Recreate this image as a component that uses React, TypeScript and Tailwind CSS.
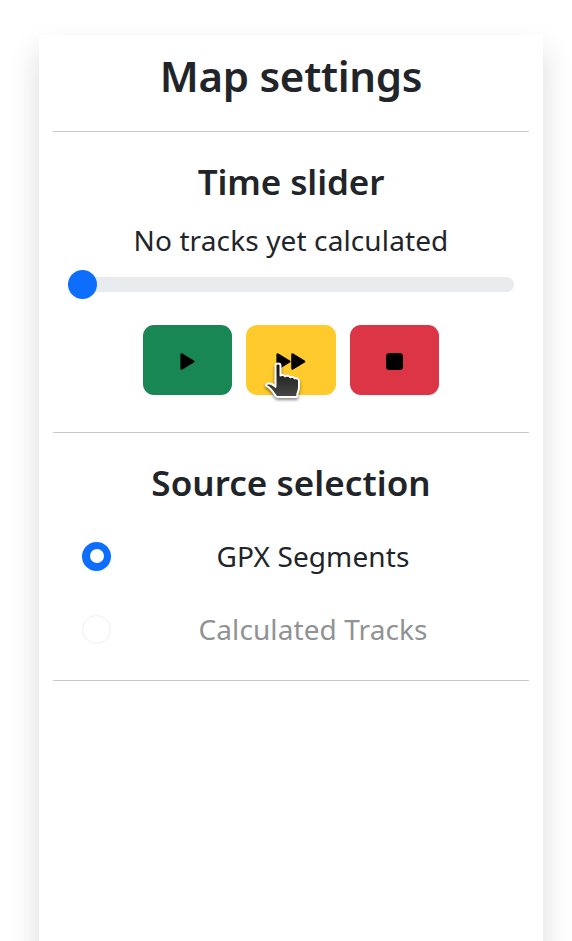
import type { ReactNode } from "react";

function Divider() {
  return <div className="h-px bg-[#c8c9ca]" />;
}

function ControlButton({ className, label, children }: { className: string; label: string; children: ReactNode }) {
  return (
    <button aria-label={label} className={"flex h-[70px] items-center justify-center rounded-[11px] " + className}>
      {children}
    </button>
  );
}

function HandCursor() {
  return (
    <svg className="pointer-events-none absolute top-[33px] left-[16px] drop-shadow-[0_2px_1.5px_rgba(0,0,0,0.45)]" width="42" height="44" viewBox="262 359 42 44">
      <defs>
        <linearGradient id="hand" x1="0" y1="0" x2="0" y2="1">
          <stop offset="0" stopColor="#111" />
          <stop offset="1" stopColor="#484848" />
        </linearGradient>
      </defs>
      <path
        d="M275.5 366.5C275.5 363.7 280.5 363.7 280.5 366.5V376.5C281.5 375.8 284 375.8 285 377.3C286.5 376.3 289.3 376.6 290.3 378.3C292 377.4 294 377.8 294.6 379.4C296.8 378.6 299 379.8 299 382.2V388C299 391.5 298 392.5 297.3 395V396.5C297.3 397.6 296.6 398 295.8 398H277.5C276.3 398 275.8 397.4 275.3 396.4C272.5 392 270.5 389 266.8 387.2C265.3 386.2 266.6 384.2 268.8 384.2C271.5 384.3 273.5 385.7 275.5 387.8Z"
        fill="url(#hand)" stroke="#fff" strokeWidth="2" strokeLinejoin="round"
      />
    </svg>
  );
}

export default function App() {
  return (
    <div className="h-[941px] overflow-hidden bg-white pt-[35px] pl-[39px] font-['Noto_Sans',sans-serif] text-[#212529]">
      <main className="h-[1100px] w-[504px] bg-white px-[14px] text-center shadow-[0_14.5px_29px_rgba(0,0,0,0.15)]">
        <h1 className="flex h-24 items-center justify-center pb-[15px] text-[42px] font-semibold tracking-[-0.3px] whitespace-nowrap">Map settings</h1>
        <Divider />
        <section className="h-[300px] pt-[28px]">
          <h2 className="flex h-[44px] items-center justify-center text-[35px] font-semibold tracking-[-0.1px] whitespace-nowrap">Time slider</h2>
          <p className="mt-[14px] flex h-[44px] items-center justify-center text-[28px] tracking-[0.12px] whitespace-nowrap">No tracks yet calculated</p>
          <div className="mx-[15px] mt-[8px] flex h-[29px] items-center">
            <div className="flex h-[15px] w-[446px] items-center rounded-full bg-[#e9ecef]">
              <div className="size-[29px] rounded-full bg-[#0d6efd]" />
            </div>
          </div>
          <div className="mt-[26px] flex justify-center gap-[14px]">
            <ControlButton label="Play" className="w-[89px] bg-[#198754]">
              <svg width="17" height="19" viewBox="0 0 17 19" className="mt-[3px]"><path d="M2.7 2.6L14.2 9.5L2.7 16.4Z" stroke="#000" strokeWidth="2.6" strokeLinejoin="round" /></svg>
            </ControlButton>
            <ControlButton label="Fast forward" className="relative w-[90px] bg-[#ffca2c]">
              <svg width="32" height="19" viewBox="0 0 32 19" className="mt-[3px]"><path d="M2.7 2.6L14.2 9.5L2.7 16.4ZM17.5 2.6L29 9.5L17.5 16.4Z" stroke="#000" strokeWidth="2.6" strokeLinejoin="round" /></svg>
              <HandCursor />
            </ControlButton>
            <ControlButton label="Stop" className="w-[89px] bg-[#dc3545]">
              <div className="mt-[3px] size-[17px] rounded-[3.5px] bg-black" />
            </ControlButton>
          </div>
        </section>
        <Divider />
        <section className="h-[247px] pt-[28px]">
          <h2 className="flex h-[44px] items-center justify-center text-[35px] font-semibold tracking-[0.05px] whitespace-nowrap">Source selection</h2>
          <div className="mt-[29px] flex h-[44px] items-center pl-[29px]">
            <div className="flex size-[29px] items-center justify-center rounded-full bg-[#0d6efd]">
              <div className="size-[14px] rounded-full bg-white" />
            </div>
            <span className="ml-[29px] w-[346px] text-[28px] tracking-[0.1px] whitespace-nowrap">GPX Segments</span>
          </div>
          <div className="mt-[29px] flex h-[44px] items-center pl-[29px]">
            <div className="size-[29px] rounded-full border border-[#efefef]" />
            <span className="ml-[29px] w-[346px] text-[28px] tracking-[0.1px] whitespace-nowrap text-[#909294]">Calculated Tracks</span>
          </div>
        </section>
        <Divider />
      </main>
    </div>
  );
}
